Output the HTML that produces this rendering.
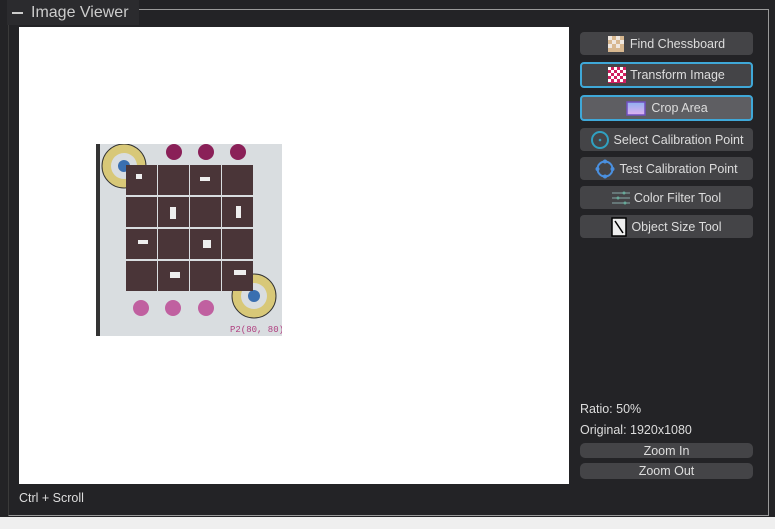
<!DOCTYPE html>
<html><head><style>
body{margin:0;width:775px;height:529px;background:#232326;position:relative;overflow:hidden;font-family:"Liberation Sans","DejaVu Sans",sans-serif;color:#ddd}
.frame{position:absolute;left:8px;top:9px;width:761px;height:507px;border:1px solid #9a9a9a;border-left:1px solid #3a3a3a;box-sizing:border-box}
.title{position:absolute;left:7px;top:0;width:132px;height:25px;background:#2b2b2e;font-size:16px;color:#ccc;line-height:26px}
.title span{position:absolute;left:5px;top:12px;width:11px;height:2px;background:#ccc}
.view{position:absolute;left:19px;top:27px;width:550px;height:457px;background:#fff}
.btn{position:absolute;left:580px;width:173px;background:#444447;border-radius:4px;font-size:12.5px;color:#ddd;display:flex;align-items:center;justify-content:center;gap:4px;box-sizing:border-box}
.sel{border:2px solid #3fa8d8}
.lbl{position:absolute;left:580px;font-size:12.5px;color:#ddd}
.bottom{position:absolute;left:0;top:517px;width:775px;height:12px;background:#efefef}
</style></head><body>
<div class="frame"></div>
<div class="title"><span></span><div style="position:absolute;left:24px;top:0">Image Viewer</div></div>
<div class="view"></div>
<svg style="position:absolute;left:96px;top:144px" width="186" height="192" viewBox="0 0 186 192">
<rect width="186" height="192" fill="#d9dde0"/>
<rect x="0" y="0" width="4" height="192" fill="#333"/>
<circle cx="28" cy="22" r="22" fill="#d8c878" stroke="#333"/><circle cx="28" cy="22" r="13" fill="#d9dde0"/><circle cx="28" cy="22" r="6" fill="#3a6fb0"/>
<circle cx="158" cy="152" r="22" fill="#d8c878" stroke="#333"/><circle cx="158" cy="152" r="13" fill="#d9dde0"/><circle cx="158" cy="152" r="6" fill="#3a6fb0"/>
<g fill="#8a2058"><circle cx="78" cy="8" r="8"/><circle cx="110" cy="8" r="8"/><circle cx="142" cy="8" r="8"/></g>
<g fill="#c060a0"><circle cx="45" cy="164" r="8"/><circle cx="77" cy="164" r="8"/><circle cx="110" cy="164" r="8"/></g>
<g fill="#4a3538">
<rect x="30" y="21" width="31" height="30"/><rect x="62" y="21" width="31" height="30"/><rect x="94" y="21" width="31" height="30"/><rect x="126" y="21" width="31" height="30"/>
<rect x="30" y="53" width="31" height="30"/><rect x="62" y="53" width="31" height="30"/><rect x="94" y="53" width="31" height="30"/><rect x="126" y="53" width="31" height="30"/>
<rect x="30" y="85" width="31" height="30"/><rect x="62" y="85" width="31" height="30"/><rect x="94" y="85" width="31" height="30"/><rect x="126" y="85" width="31" height="30"/>
<rect x="30" y="117" width="31" height="30"/><rect x="62" y="117" width="31" height="30"/><rect x="94" y="117" width="31" height="30"/><rect x="126" y="117" width="31" height="30"/>
</g>
<g fill="#eee"><rect x="40" y="30" width="6" height="5"/><rect x="104" y="33" width="10" height="4"/><rect x="74" y="63" width="6" height="12"/><rect x="140" y="62" width="5" height="12"/><rect x="42" y="96" width="10" height="4"/><rect x="107" y="96" width="8" height="8"/><rect x="74" y="128" width="10" height="6"/><rect x="138" y="126" width="12" height="5"/></g>
<text x="134" y="188" font-size="9" fill="#b04080" font-family="Liberation Mono">P2(80, 80)</text>
</svg>
<div class="btn" style="top:32px;height:23px"><svg width="18" height="16"><rect width="16" height="16" fill="#d8b890"/><g fill="#f0e8e0"><rect x="0" y="0" width="4" height="4"/><rect x="8" y="0" width="4" height="4"/><rect x="4" y="4" width="4" height="4"/><rect x="12" y="4" width="4" height="4"/><rect x="0" y="8" width="4" height="4"/><rect x="8" y="8" width="4" height="4"/></g></svg>Find Chessboard</div>
<div class="btn sel" style="top:62px;height:26px"><svg width="18" height="16"><rect width="18" height="16" fill="#d02060"/><g fill="#fff"><rect x="0" y="0" width="3" height="3"/><rect x="6" y="0" width="3" height="3"/><rect x="12" y="0" width="3" height="3"/><rect x="3" y="3" width="3" height="3"/><rect x="9" y="3" width="3" height="3"/><rect x="15" y="3" width="3" height="3"/><rect x="0" y="6" width="3" height="3"/><rect x="6" y="6" width="3" height="3"/><rect x="12" y="6" width="3" height="3"/><rect x="3" y="9" width="3" height="3"/><rect x="9" y="9" width="3" height="3"/><rect x="15" y="9" width="3" height="3"/><rect x="0" y="12" width="3" height="3"/><rect x="6" y="12" width="3" height="3"/><rect x="12" y="12" width="3" height="3"/></g></svg>Transform Image</div>
<div class="btn sel" style="top:95px;height:26px;background:#5e5e62"><svg width="22" height="17"><defs><linearGradient id="g" x1="0" y1="0" x2="0" y2="1"><stop offset="0" stop-color="#8fb0f0"/><stop offset="1" stop-color="#e0b0f0"/></linearGradient></defs><rect x="2" y="2" width="18" height="13" fill="url(#g)" stroke="#7050c0" stroke-width="1.5"/></svg>Crop Area</div>
<div class="btn" style="top:128px;height:23px"><svg width="20" height="20"><circle cx="10" cy="10" r="8" fill="none" stroke="#30a0c0" stroke-width="2"/><circle cx="10" cy="10" r="1.3" fill="#30a0c0"/></svg>Select Calibration Point</div>
<div class="btn" style="top:157px;height:23px"><svg width="20" height="20"><circle cx="10" cy="10" r="7.5" fill="none" stroke="#4a90e0" stroke-width="2"/><g fill="#4a90e0"><circle cx="10" cy="2.5" r="2"/><circle cx="10" cy="17.5" r="2"/><circle cx="2.5" cy="10" r="2"/><circle cx="17.5" cy="10" r="2"/></g></svg>Test Calibration Point</div>
<div class="btn" style="top:186px;height:23px"><svg width="18" height="14"><g stroke="#8aa" stroke-width="1"><line x1="0" y1="2" x2="18" y2="2"/><line x1="0" y1="7" x2="18" y2="7"/><line x1="0" y1="12" x2="18" y2="12"/></g><g fill="#6a9"><circle cx="12" cy="2" r="1.5"/><circle cx="6" cy="7" r="1.5"/><circle cx="13" cy="12" r="1.5"/></g></svg>Color Filter Tool</div>
<div class="btn" style="top:215px;height:23px"><svg width="16" height="20"><rect x="1" y="1" width="14" height="18" fill="#eee" stroke="#000" stroke-width="1.5"/><line x1="4" y1="4" x2="12" y2="16" stroke="#000" stroke-width="1.5"/></svg>Object Size Tool</div>
<div class="lbl" style="top:402px">Ratio: 50%</div>
<div class="lbl" style="top:423px">Original: 1920x1080</div>
<div class="btn" style="top:443px;height:15px;border-radius:5px">Zoom In</div>
<div class="btn" style="top:463px;height:16px;border-radius:5px">Zoom Out</div>
<div style="position:absolute;left:19px;top:491px;font-size:12.5px;color:#ddd">Ctrl + Scroll</div>
<div class="bottom"></div>
</body></html>
